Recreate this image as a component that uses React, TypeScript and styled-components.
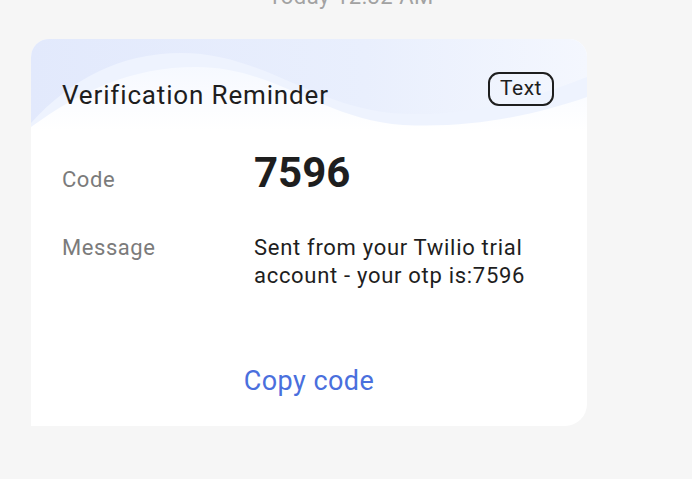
import React from "react";
import styled, { createGlobalStyle } from "styled-components";

const Global = createGlobalStyle`
  html, body { margin: 0; padding: 0; background: #f6f6f6; }
  body { font-family: Roboto, "Noto Sans", "Liberation Sans", sans-serif; overflow: hidden; }
`;

const Page = styled.div`
  width: 692px;
  height: 479px;
  display: flex;
  flex-direction: column;
  padding-left: 31px;
  box-sizing: border-box;
`;

const Timestamp = styled.div`
  margin-top: -16px;
  height: 26px;
  line-height: 26px;
  font-size: 22px;
  letter-spacing: 0.5px;
  color: #a2a2a2;
  text-align: center;
  width: 640px;
`;

const Card = styled.div`
  margin-top: 29px;
  width: 556px;
  height: 387px;
  background: #ffffff;
  border-radius: 18px 18px 22px 0;
  overflow: hidden;
  display: flex;
  flex-direction: column;
  box-sizing: border-box;
`;

const Header = styled.div`
  position: relative;
  height: 92px;
  flex: none;
  display: flex;
  align-items: flex-start;
  justify-content: space-between;
  padding: 33px 33px 0 31px;
  box-sizing: border-box;
`;

const HeaderArt = styled.svg`
  position: absolute;
  inset: 0;
  width: 100%;
  height: 100%;
`;

const Title = styled.div`
  position: relative;
  margin-top: 7px;
  font-size: 26px;
  line-height: 32px;
  letter-spacing: 0.85px;
  color: #1e1e1e;
`;

const Badge = styled.div`
  position: relative;
  height: 34px;
  padding: 0 10px;
  box-sizing: border-box;
  border: 2px solid #1e1e1e;
  border-radius: 11px;
  font-size: 21px;
  line-height: 28px;
  letter-spacing: 0.5px;
  color: #1e1e1e;
`;

const Body = styled.div`
  padding: 17px 31px 0 31px;
  display: flex;
  flex-direction: column;
`;

const Row = styled.div<{ $gap?: number }>`
  display: flex;
  align-items: baseline;
  margin-top: ${(p) => p.$gap ?? 0}px;
`;

const Label = styled.div`
  width: 192px;
  flex: none;
  font-size: 22px;
  line-height: 28px;
  letter-spacing: 0.55px;
  color: #7b7b7b;
`;

const CodeValue = styled.div`
  font-size: 42px;
  line-height: 50px;
  font-weight: 700;
  color: #1e1e1e;
`;

const MessageValue = styled.div`
  width: 290px;
  font-size: 22px;
  line-height: 28px;
  letter-spacing: 0.7px;
  color: #1e1e1e;
`;

const CopyButton = styled.button`
  margin: 74px auto 0;
  background: none;
  border: none;
  padding: 0;
  font-family: inherit;
  font-size: 27px;
  line-height: 34px;
  letter-spacing: 0.45px;
  color: #4a6fdd;
  cursor: pointer;
`;

export default function App() {
  return (
    <>
      <Global />
      <Page>
        <Timestamp>Today 12:32 AM</Timestamp>
        <Card>
          <Header>
            <HeaderArt viewBox="0 0 556 92" preserveAspectRatio="none">
              <defs>
                <linearGradient id="hbg" x1="0" y1="0" x2="1" y2="0">
                  <stop offset="0" stopColor="#e2e9fc" />
                  <stop offset="0.6" stopColor="#e9effd" />
                  <stop offset="1" stopColor="#f4f7fe" />
                </linearGradient>
                <linearGradient id="wfade" x1="0" y1="0" x2="0" y2="1">
                  <stop offset="0" stopColor="#f6f9ff" />
                  <stop offset="1" stopColor="#ffffff" />
                </linearGradient>
              </defs>
              <rect x="0" y="0" width="556" height="92" fill="url(#hbg)" />
              <path
                d="M0,84 C40,40 90,14 150,14 C230,14 280,66 360,74 C430,80 500,60 556,38 L556,92 L0,92 Z"
                fill="#eef3fe"
              />
              <path
                d="M0,88 C50,52 100,28 165,28 C245,28 290,80 372,86 C445,90 510,74 556,58 L556,92 L0,92 Z"
                fill="url(#wfade)"
              />
            </HeaderArt>
            <Title>Verification Reminder</Title>
            <Badge>Text</Badge>
          </Header>
          <Body>
            <Row>
              <Label>Code</Label>
              <CodeValue>7596</CodeValue>
            </Row>
            <Row $gap={36}>
              <Label>Message</Label>
              <MessageValue>Sent from your Twilio trial account - your otp is:7596</MessageValue>
            </Row>
            <CopyButton>Copy code</CopyButton>
          </Body>
        </Card>
      </Page>
    </>
  );
}
